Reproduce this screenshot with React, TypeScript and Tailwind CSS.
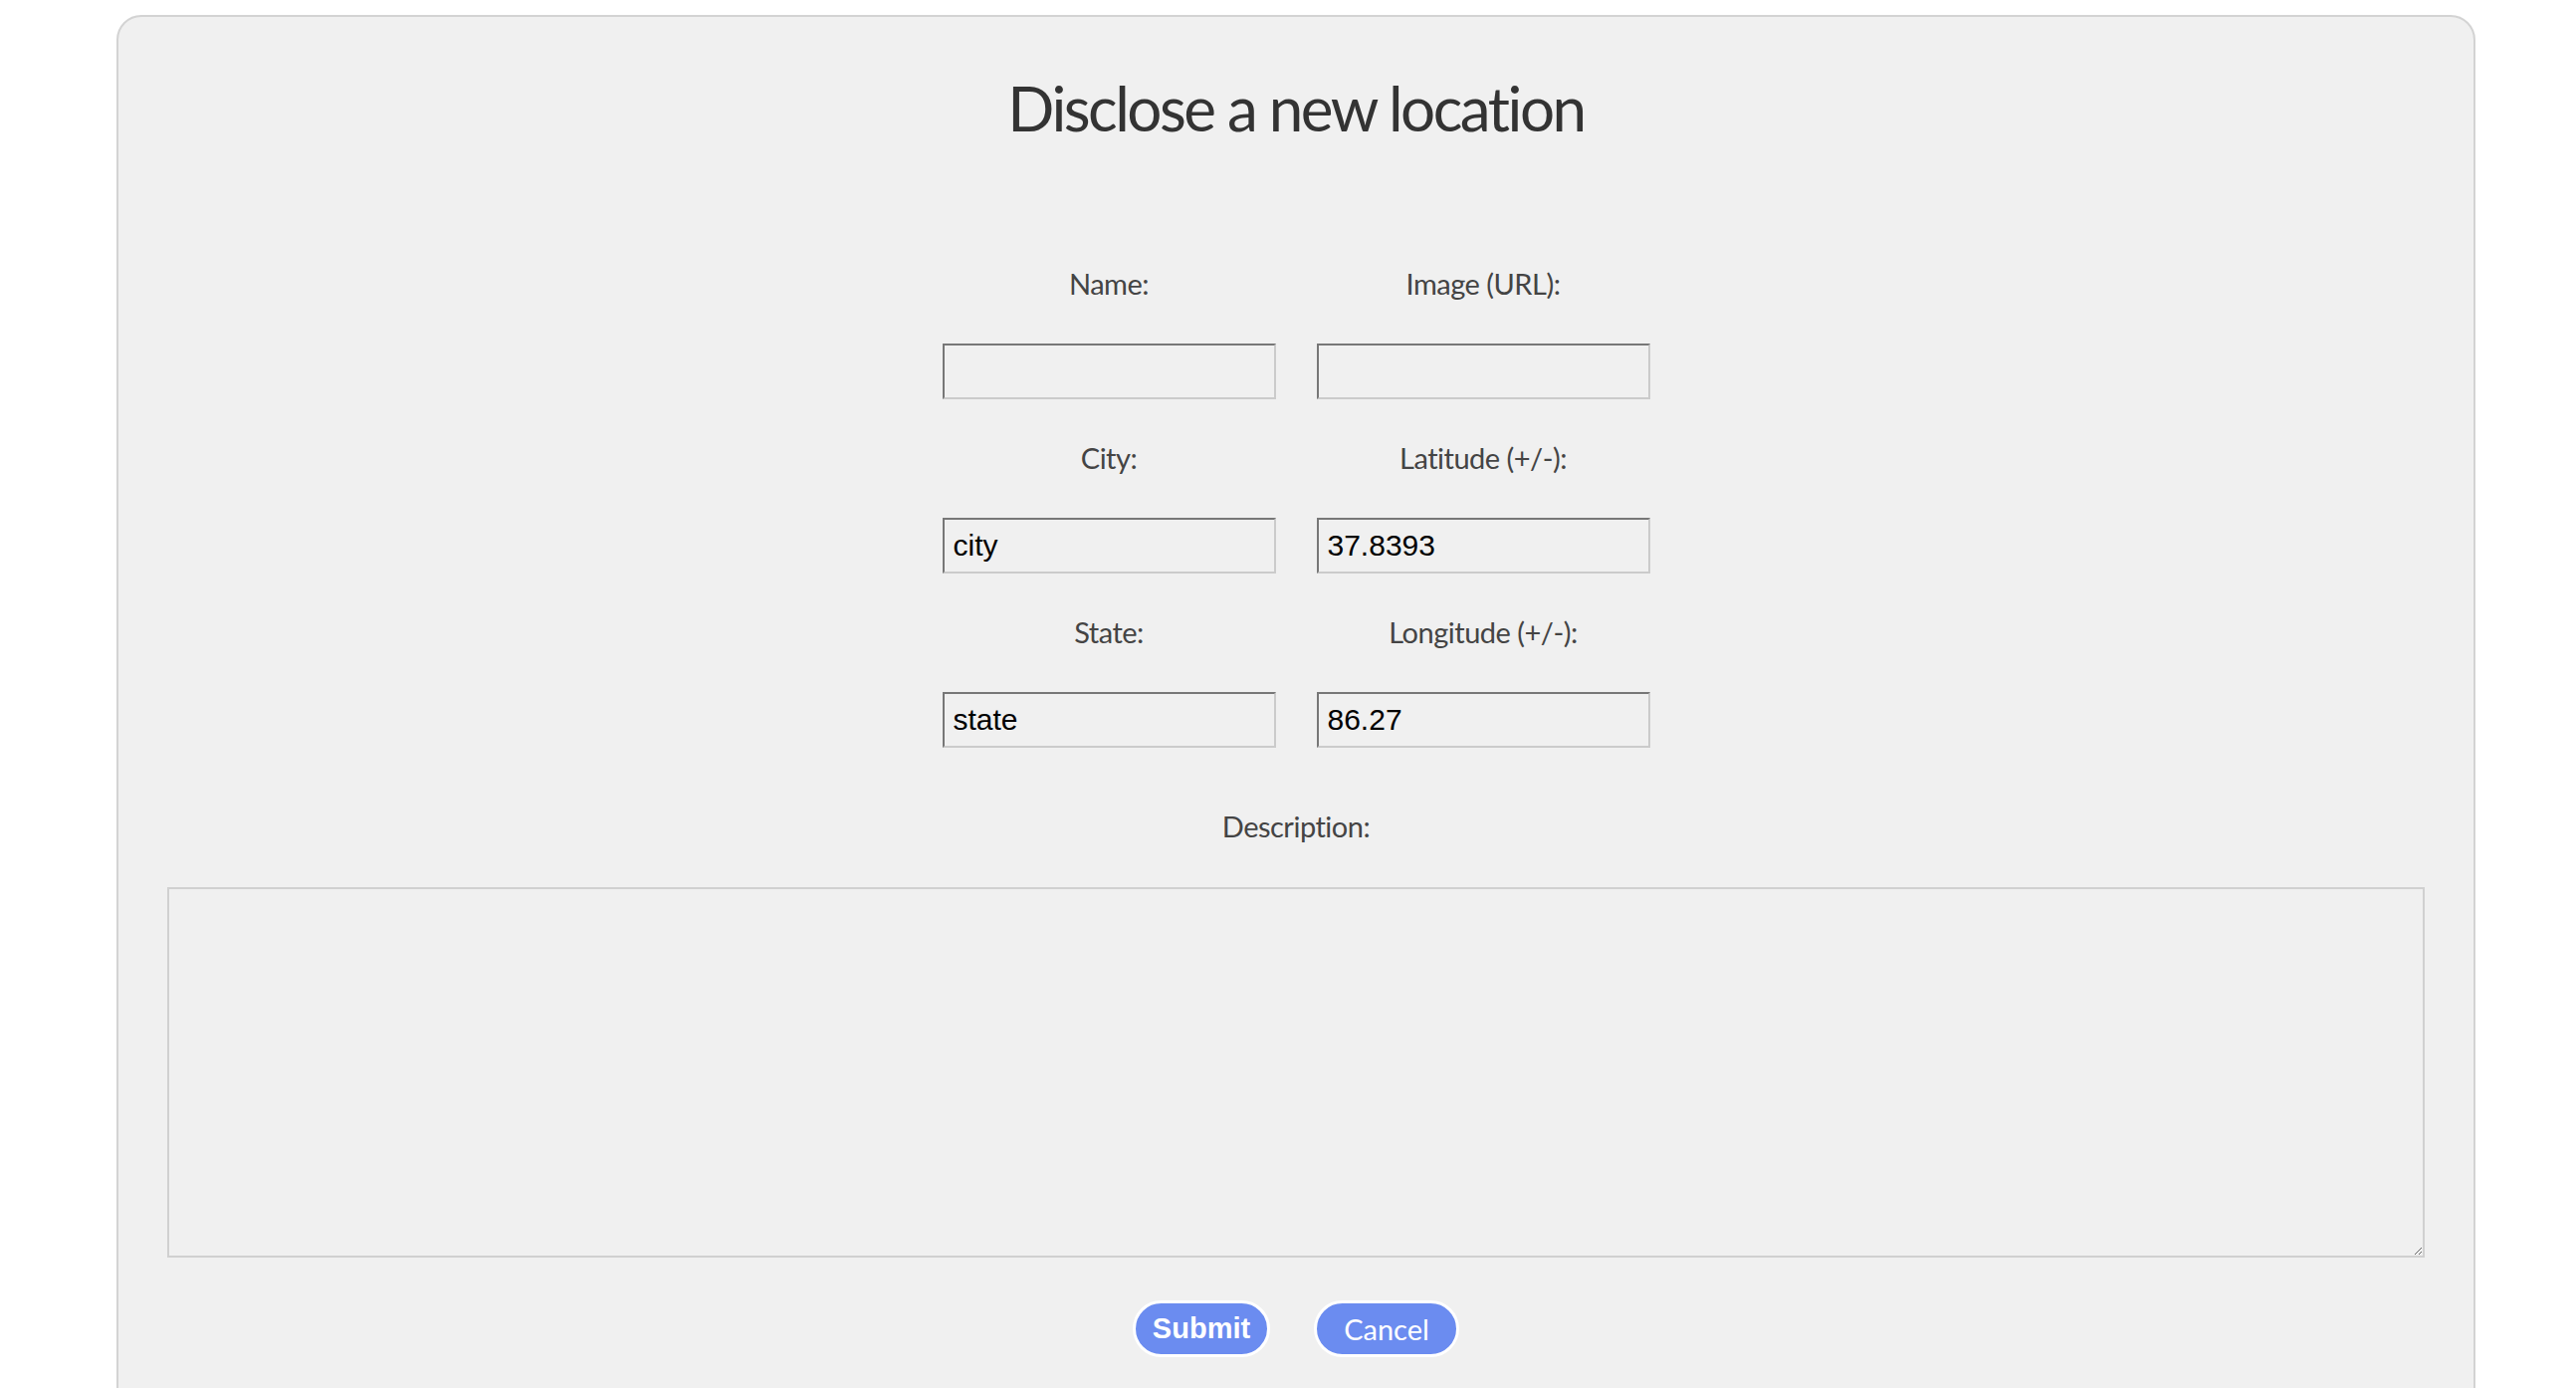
import React from 'react';

// ============================================================================
// FIELD
// ============================================================================

const labelFont = { fontFamily: 'Lato, "Open Sans", sans-serif' };
const inputFont = { fontFamily: '"Liberation Sans", Arial, sans-serif' };

function Field({ label, value }: { label: string; value?: string }) {
    return (
        <div className="flex flex-col items-center">
            <label
                className="block h-[40px] text-[29px] leading-[40px] font-normal tracking-[-0.5px] text-[#444]"
                style={labelFont}
            >
                {label}
            </label>
            <input
                type="text"
                defaultValue={value}
                className="mt-[40px] h-[56px] w-[335px] border-2 border-t-[#777] border-l-[#777] border-r-[#cbcbcb] border-b-[#cbcbcb] bg-[#f0f0f0] pl-[9px] text-[30px] text-black outline-none"
                style={inputFont}
            />
        </div>
    );
}

// ============================================================================
// APP
// ============================================================================

export default function App() {
    return (
        <div className="h-[1394px] overflow-hidden bg-white pt-[15px]">
            <div className="ml-[117px] h-[1420px] w-[2370px] rounded-t-[25px] border-2 border-[#d3d3d3] bg-[#f0f0f0]">
                <h1
                    className="mt-[60px] text-center text-[62px] leading-[62px] font-normal tracking-[-2.5px] text-[#333]"
                    style={labelFont}
                >
                    Disclose a new location
                </h1>

                <form className="flex flex-col items-center" onSubmit={(e) => e.preventDefault()}>
                    <div className="mt-[126px] grid grid-cols-[335px_335px] gap-x-[41px] gap-y-[39px]">
                        <Field label="Name:" />
                        <Field label="Image (URL):" />
                        <Field label="City:" value="city" />
                        <Field label="Latitude (+/-):" value="37.8393" />
                        <Field label="State:" value="state" />
                        <Field label="Longitude (+/-):" value="86.27" />
                    </div>

                    <label
                        className="mt-[59px] block h-[40px] text-[29px] leading-[40px] font-normal tracking-[-0.5px] text-[#444]"
                        style={labelFont}
                    >
                        Description:
                    </label>

                    <div className="mt-[41px] w-full px-[49px]">
                        <textarea className="block h-[372px] w-full border-2 border-[#d0d0d0] bg-[#f0f0f0] outline-none" />
                    </div>

                    <div className="mt-[43px] flex gap-[44px]">
                        <button
                            type="submit"
                            className="h-[57px] w-[138px] rounded-full border-[3px] border-white bg-[#6b8cf0] text-[29px] font-bold text-white"
                            style={inputFont}
                        >
                            Submit
                        </button>
                        <button
                            type="button"
                            className="h-[57px] w-[146px] rounded-full border-[3px] border-white bg-[#6b8cf0] text-[29px] font-normal text-white"
                            style={labelFont}
                        >
                            Cancel
                        </button>
                    </div>
                </form>
            </div>
        </div>
    );
}
